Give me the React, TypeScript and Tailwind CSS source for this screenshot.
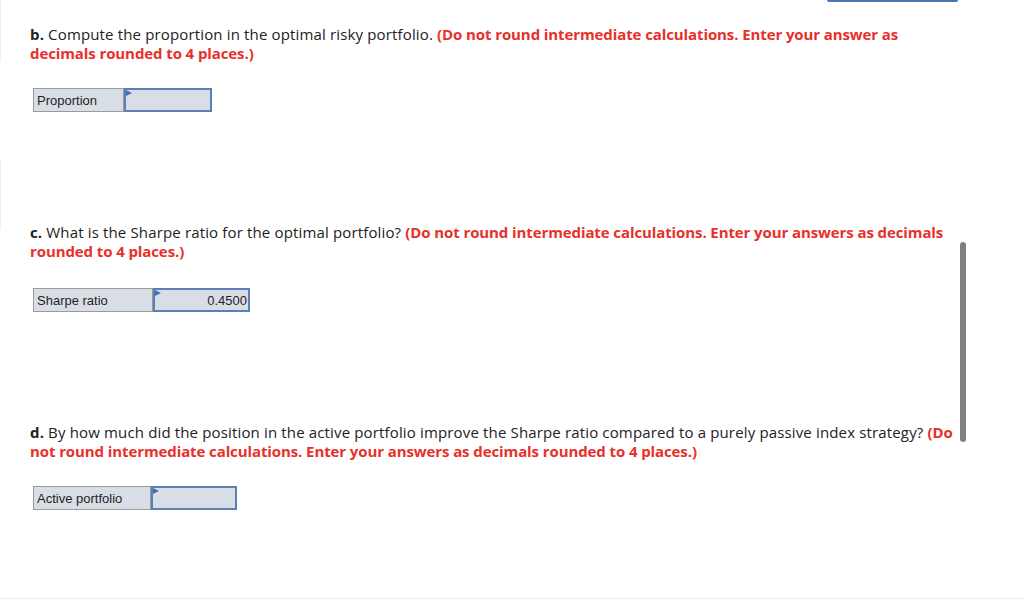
import React from 'react';

type RowProps = { label: string; labelW: number; inputW: number; value?: string };

const AnswerRow: React.FC<RowProps> = ({ label, labelW, inputW, value }) => (
  <div className="flex h-[24px] w-fit border border-[#9b9b9b] bg-[#d9dde6] font-['Liberation_Sans',Arial,sans-serif] text-[13px] text-[#1f1f1f]">
    <div style={{ width: labelW }} className="flex items-center border-r border-[#9b9b9b] pl-[3px]">
      {label}
    </div>
    <div
      style={{ width: inputW }}
      className="relative flex items-center justify-end border-2 border-[#5b80b8] pr-[1px] -my-px -mr-px"
    >
      <span className="absolute left-0 top-0 h-0 w-0 border-l-[6px] border-t-[3px] border-b-[3px] border-l-[#3f6fb8] border-t-transparent border-b-transparent" />
      {value}
    </div>
  </div>
);

// red instruction text
const Note: React.FC<{ children: React.ReactNode }> = ({ children }) => (
  <b className="tracking-[-0.1px] text-[#e8302a]">{children}</b>
);

export default function App() {
  return (
    <div className="relative h-[604px] w-[1024px] overflow-hidden bg-white font-['Open_Sans',sans-serif] text-[15px] leading-[19px] tracking-[0.15px] text-[#222]">
      {/* top blue tab fragment */}
      <div className="absolute left-[827px] top-0 h-[2px] w-[131px] rounded-b bg-[#4a74b3]" />
      {/* faint left edge marks */}
      <div className="absolute left-0 top-0 h-[62px] w-px bg-[#efefef]" />
      <div className="absolute left-0 top-[160px] h-[70px] w-px bg-[#efefef]" />

      <div className="flex flex-col pl-[30px] pt-[25px]">
        {/* b */}
        <section className="flex flex-col">
          <p className="whitespace-nowrap">
            <b>b.</b> Compute the proportion in the optimal risky portfolio.{' '}
            <Note>(Do not round intermediate calculations. Enter your answer as</Note>
            <br />
            <Note>decimals rounded to 4 places.)</Note>
          </p>
          <div className="mt-[25px] pl-[3px] tracking-normal">
            <AnswerRow label="Proportion" labelW={90} inputW={88} />
          </div>
        </section>

        {/* c */}
        <section className="mt-[111px] flex flex-col">
          <p className="whitespace-nowrap">
            <b>c.</b> What is the Sharpe ratio for the optimal portfolio?{' '}
            <Note>(Do not round intermediate calculations. Enter your answers as decimals</Note>
            <br />
            <Note>rounded to 4 places.)</Note>
          </p>
          <div className="mt-[27px] pl-[3px] tracking-normal">
            <AnswerRow label="Sharpe ratio" labelW={119} inputW={97} value="0.4500" />
          </div>
        </section>

        {/* d */}
        <section className="mt-[111px] flex flex-col">
          <p className="whitespace-nowrap">
            <b>d.</b> By how much did the position in the active portfolio improve the Sharpe ratio compared to a purely passive index strategy?{' '}
            <Note>(Do</Note>
            <br />
            <Note>not round intermediate calculations. Enter your answers as decimals rounded to 4 places.)</Note>
          </p>
          <div className="mt-[25px] pl-[3px] tracking-normal">
            <AnswerRow label="Active portfolio" labelW={117} inputW={86} />
          </div>
        </section>
      </div>

      {/* scrollbar thumb */}
      <div className="absolute left-[960px] top-[242px] h-[200px] w-[6px] rounded-full bg-[#808080]" />
      {/* bottom rule */}
      <div className="absolute bottom-[5px] left-0 h-px w-full bg-[#eeeeee]" />
    </div>
  );
}
